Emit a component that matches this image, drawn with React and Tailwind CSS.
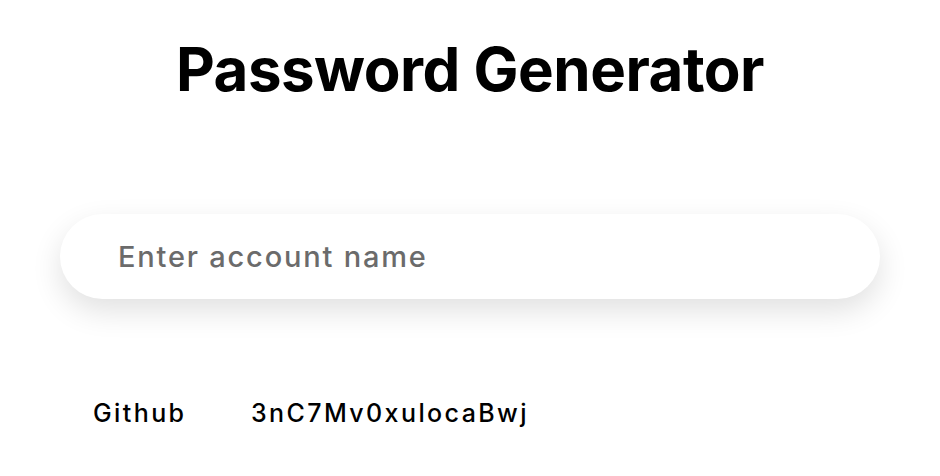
export default function App() {
  return (
    <div className="w-[940px] h-[476px] bg-white flex flex-col items-center">
      <h1 className="mt-[31px] text-[60px] leading-[76px] font-bold text-black tracking-[-0.5px] font-['Inter',sans-serif]">
        Password Generator
      </h1>
      <div className="mt-[107px] w-[820px] h-[85px] rounded-full bg-white shadow-[0_12px_30px_rgba(0,0,0,0.12)] flex items-center pl-[58px]">
        <input
          className="w-full bg-transparent outline-none text-[29px] font-medium tracking-[1.8px] text-[#6b6b6b] placeholder:text-[#6b6b6b] font-['Inter',sans-serif]"
          placeholder="Enter account name"
        />
      </div>
      <div className="self-start ml-[93px] mt-[96px] flex items-center text-[25px] font-medium tracking-[2.4px] text-black font-['Inter',sans-serif]">
        <span className="w-[158px]">Github</span>
        <span>3nC7Mv0xulocaBwj</span>
      </div>
    </div>
  );
}
